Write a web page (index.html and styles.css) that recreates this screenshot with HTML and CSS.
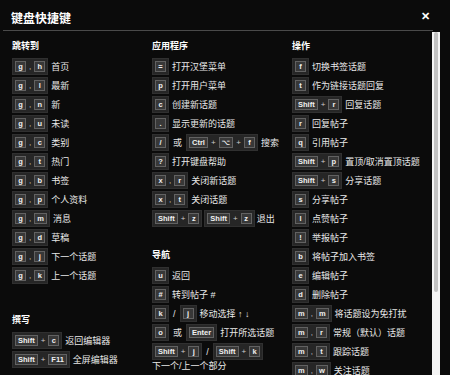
FILE: index.html
```html
<!DOCTYPE html>
<html lang="zh-CN">
<head>
    <meta charset="UTF-8" />
    <title>键盘快捷键</title>
    <link rel="stylesheet" href="styles.css">
</head>
<body>
<div class="modal">
    <div class="modal-header">
        <h3>键盘快捷键</h3>
        <span class="close">&#x2715;</span>
    </div>
    <div class="modal-body">
        <div class="columns">
            <!-- 第一列 -->
            <div class="column">
                <h4>跳转到</h4>
                <ul>
                    <li><span class="keys"><kbd>g</kbd><i>,</i><kbd>h</kbd></span><span class="desc">首页</span></li>
                    <li><span class="keys"><kbd>g</kbd><i>,</i><kbd>l</kbd></span><span class="desc">最新</span></li>
                    <li><span class="keys"><kbd>g</kbd><i>,</i><kbd>n</kbd></span><span class="desc">新</span></li>
                    <li><span class="keys"><kbd>g</kbd><i>,</i><kbd>u</kbd></span><span class="desc">未读</span></li>
                    <li><span class="keys"><kbd>g</kbd><i>,</i><kbd>c</kbd></span><span class="desc">类别</span></li>
                    <li><span class="keys"><kbd>g</kbd><i>,</i><kbd>t</kbd></span><span class="desc">热门</span></li>
                    <li><span class="keys"><kbd>g</kbd><i>,</i><kbd>b</kbd></span><span class="desc">书签</span></li>
                    <li><span class="keys"><kbd>g</kbd><i>,</i><kbd>p</kbd></span><span class="desc">个人资料</span></li>
                    <li><span class="keys"><kbd>g</kbd><i>,</i><kbd>m</kbd></span><span class="desc">消息</span></li>
                    <li><span class="keys"><kbd>g</kbd><i>,</i><kbd>d</kbd></span><span class="desc">草稿</span></li>
                    <li><span class="keys"><kbd>g</kbd><i>,</i><kbd>j</kbd></span><span class="desc">下一个话题</span></li>
                    <li><span class="keys"><kbd>g</kbd><i>,</i><kbd>k</kbd></span><span class="desc">上一个话题</span></li>
                </ul>
                <h4 class="section-compose">撰写</h4>
                <ul>
                    <li><span class="keys"><kbd>Shift</kbd><i>+</i><kbd>c</kbd></span><span class="desc">返回编辑器</span></li>
                    <li><span class="keys"><kbd>Shift</kbd><i>+</i><kbd>F11</kbd></span><span class="desc">全屏编辑器</span></li>
                </ul>
            </div>

            <!-- 第二列 -->
            <div class="column">
                <h4>应用程序</h4>
                <ul>
                    <li><span class="keys"><kbd>=</kbd></span><span class="desc">打开汉堡菜单</span></li>
                    <li><span class="keys"><kbd>p</kbd></span><span class="desc">打开用户菜单</span></li>
                    <li><span class="keys"><kbd>c</kbd></span><span class="desc">创建新话题</span></li>
                    <li><span class="keys"><kbd>.</kbd></span><span class="desc">显示更新的话题</span></li>
                    <li><span class="keys"><kbd>/</kbd></span><span class="sep">或</span><span class="keys"><kbd>Ctrl</kbd><i>+</i><kbd>&#x2325;</kbd><i>+</i><kbd>f</kbd></span><span class="desc">搜索</span></li>
                    <li><span class="keys"><kbd>?</kbd></span><span class="desc">打开键盘帮助</span></li>
                    <li><span class="keys"><kbd>x</kbd><i>,</i><kbd>r</kbd></span><span class="desc">关闭新话题</span></li>
                    <li><span class="keys"><kbd>x</kbd><i>,</i><kbd>t</kbd></span><span class="desc">关闭话题</span></li>
                    <li class="tight"><span class="keys"><kbd>Shift</kbd><i>+</i><kbd>z</kbd></span><span class="keys"><kbd>Shift</kbd><i>+</i><kbd>z</kbd></span><span class="desc">退出</span></li>
                </ul>
                <h4 class="section-nav">导航</h4>
                <ul>
                    <li><span class="keys"><kbd>u</kbd></span><span class="desc">返回</span></li>
                    <li><span class="keys"><kbd>#</kbd></span><span class="desc">转到帖子 #</span></li>
                    <li><span class="keys"><kbd>k</kbd></span><span class="sep">/</span><span class="keys"><kbd>j</kbd></span><span class="desc">移动选择 &uarr; &darr;</span></li>
                    <li><span class="keys"><kbd>o</kbd></span><span class="sep">或</span><span class="keys"><kbd>Enter</kbd></span><span class="desc">打开所选话题</span></li>
                    <li class="wrap"><span class="keys"><kbd>Shift</kbd><i>+</i><kbd>j</kbd></span><span class="sep">/</span><span class="keys"><kbd>Shift</kbd><i>+</i><kbd>k</kbd></span><span class="desc">下一个/上一个部分</span></li>
                </ul>
            </div>

            <!-- 第三列 -->
            <div class="column">
                <h4>操作</h4>
                <ul>
                    <li><span class="keys"><kbd>f</kbd></span><span class="desc">切换书签话题</span></li>
                    <li><span class="keys"><kbd>t</kbd></span><span class="desc">作为链接话题回复</span></li>
                    <li><span class="keys"><kbd>Shift</kbd><i>+</i><kbd>r</kbd></span><span class="desc">回复话题</span></li>
                    <li><span class="keys"><kbd>r</kbd></span><span class="desc">回复帖子</span></li>
                    <li><span class="keys"><kbd>q</kbd></span><span class="desc">引用帖子</span></li>
                    <li><span class="keys"><kbd>Shift</kbd><i>+</i><kbd>p</kbd></span><span class="desc">置顶/取消置顶话题</span></li>
                    <li><span class="keys"><kbd>Shift</kbd><i>+</i><kbd>s</kbd></span><span class="desc">分享话题</span></li>
                    <li><span class="keys"><kbd>s</kbd></span><span class="desc">分享帖子</span></li>
                    <li><span class="keys"><kbd>l</kbd></span><span class="desc">点赞帖子</span></li>
                    <li><span class="keys"><kbd>!</kbd></span><span class="desc">举报帖子</span></li>
                    <li><span class="keys"><kbd>b</kbd></span><span class="desc">将帖子加入书签</span></li>
                    <li><span class="keys"><kbd>e</kbd></span><span class="desc">编辑帖子</span></li>
                    <li><span class="keys"><kbd>d</kbd></span><span class="desc">删除帖子</span></li>
                    <li><span class="keys"><kbd>m</kbd><i>,</i><kbd>m</kbd></span><span class="desc">将话题设为免打扰</span></li>
                    <li><span class="keys"><kbd>m</kbd><i>,</i><kbd>r</kbd></span><span class="desc">常规（默认）话题</span></li>
                    <li><span class="keys"><kbd>m</kbd><i>,</i><kbd>t</kbd></span><span class="desc">跟踪话题</span></li>
                    <li><span class="keys"><kbd>m</kbd><i>,</i><kbd>w</kbd></span><span class="desc">关注话题</span></li>
                </ul>
            </div>
        </div>
        <!-- 滚动条 -->
        <div class="scrollbar"><div class="thumb"></div></div>
    </div>
</div>
</body>
</html>
```

FILE: styles.css
```css
html, body {
    margin: 0;
    height: 100%;
    background-color: #0b0b0b;
    overflow: hidden;
}

body {
    font-family: "Liberation Sans", "Noto Sans CJK SC", sans-serif;
    color: #ddd;
}

.modal {
    margin-left: 3px;
    width: 437px;
    height: 375px;
    display: flex;
    flex-direction: column;
    background-color: #0b0b0b;
}

.modal-header {
    height: 31px;
    display: flex;
    align-items: center;
    justify-content: space-between;
    padding: 0 10px 0 8px;
    border-bottom: 1px solid #4a4a4a;
    margin-right: 7px;
    box-sizing: border-box;
}

.modal-header h3 {
    margin: 0;
    font-size: 12px;
    font-weight: bold;
    color: #fff;
    padding-top: 4px;
}

.close {
    font-size: 11px;
    font-weight: bold;
    color: #fff;
    padding-top: 3px;
    margin-right: -7px;
}

.modal-body {
    flex: 1;
    display: flex;
    min-height: 0;
    margin-top: 1px;
}

.columns {
    flex: 1;
    display: grid;
    grid-template-columns: 140px 140px 140px;
    padding: 8px 0 0 9px;
    overflow: hidden;
}

h4 {
    margin: 0 0 6px;
    font-size: 9px;
    line-height: 12px;
    font-weight: bold;
    color: #fff;
}

.section-compose {
    margin-top: 30px;
}

.section-nav {
    margin-top: 22px;
}

ul {
    list-style: none;
    margin: 0;
    padding: 0;
}

li {
    display: flex;
    align-items: center;
    gap: 3px;
    height: 17px;
    margin-bottom: 2px;
    font-size: 9px;
    white-space: nowrap;
}

li.wrap {
    flex-wrap: wrap;
    height: auto;
    row-gap: 0;
}

li.tight {
    gap: 2px;
}

.keys {
    display: inline-flex;
    align-items: center;
    gap: 3px;
    height: 17px;
    box-sizing: border-box;
    padding: 2px;
    background-color: #262626;
    border: 1px solid #303030;
}

.keys i {
    font-style: normal;
    font-size: 8px;
    color: #ccc;
}

kbd {
    display: inline-block;
    box-sizing: border-box;
    min-width: 11px;
    height: 11px;
    line-height: 9px;
    padding: 0 2px;
    border: 1px solid #626262;
    background-color: #383838;
    color: #f0f0f0;
    font-family: "Liberation Sans", "DejaVu Sans", sans-serif;
    font-size: 7.5px;
    font-weight: bold;
    text-align: center;
}

.sep {
    margin: 0 1px;
    color: #e6e6e6;
}

.desc {
    line-height: 12px;
    color: #e8e8e8;
}

/* Barra de desplazamiento */
.scrollbar {
    width: 8px;
    background-color: #f4f4f4;
    display: flex;
    justify-content: center;
}

.thumb {
    width: 4px;
    height: 260px;
    background-color: #c1c1c1;
    border-radius: 2px;
}
```
